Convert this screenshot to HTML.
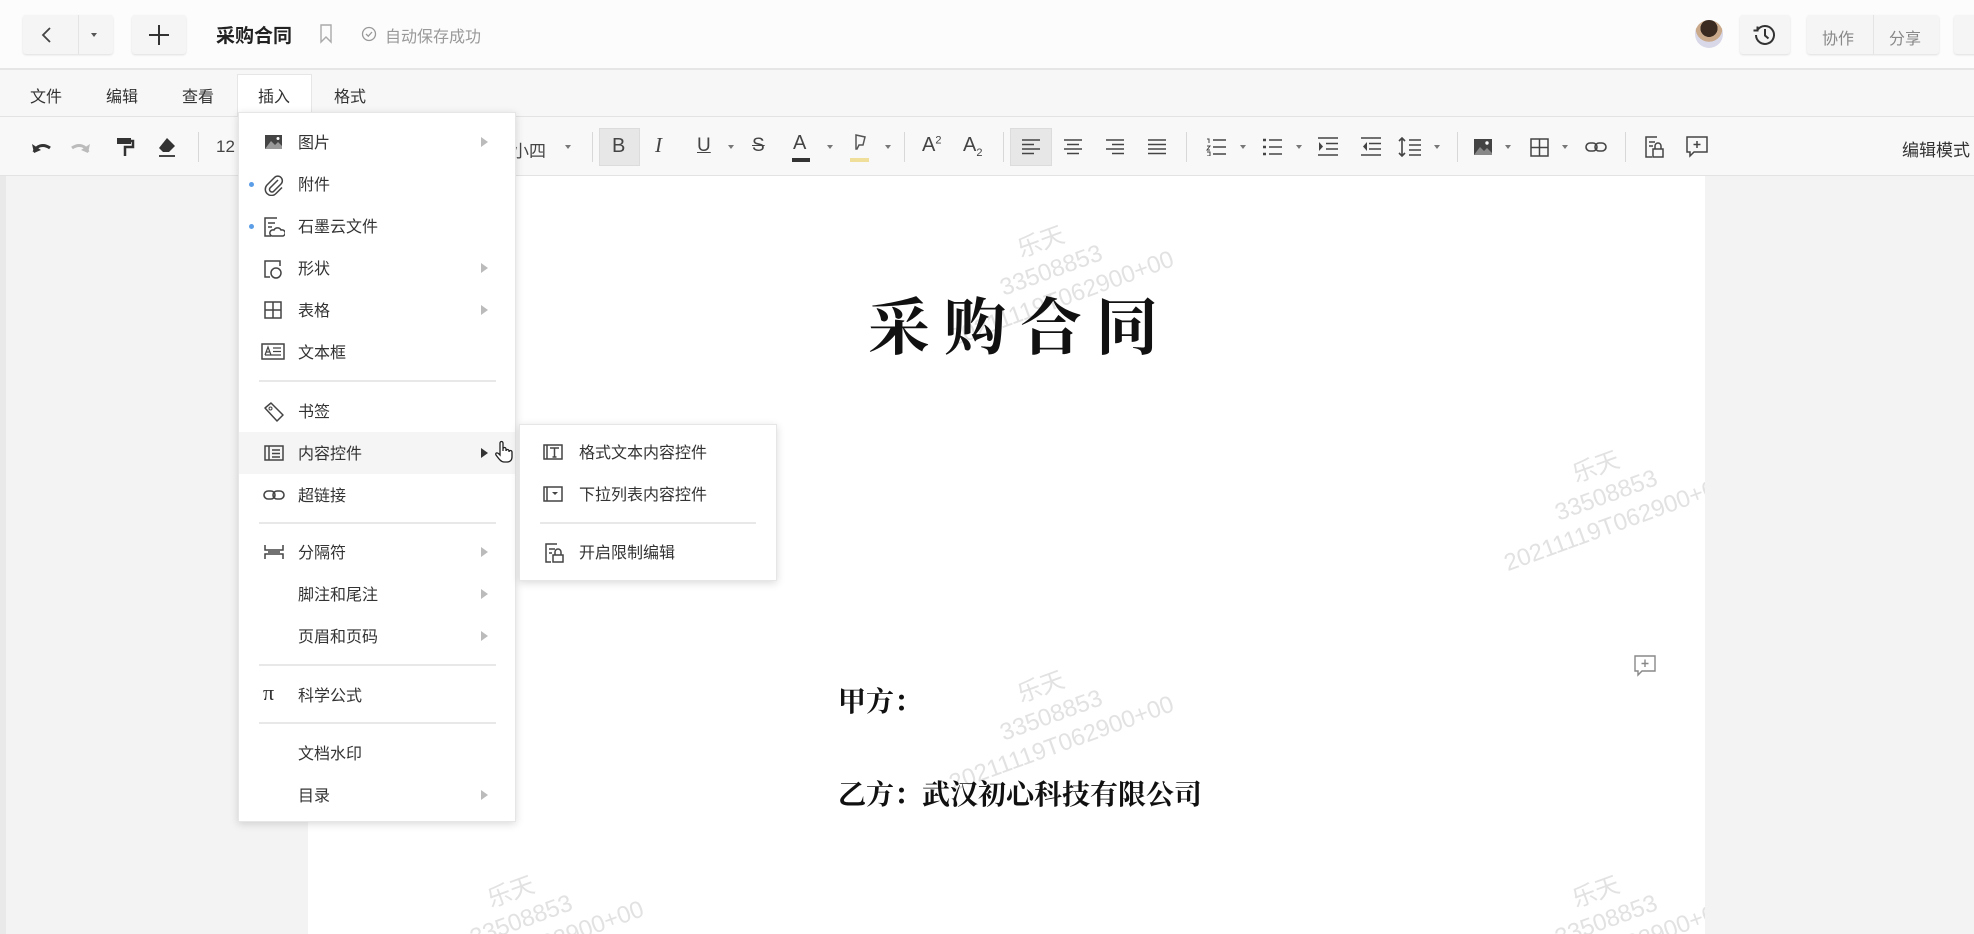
<!DOCTYPE html>
<html style="width:1974px;height:934px;overflow:hidden"><head><meta charset="utf-8">
<style>
*{margin:0;padding:0;box-sizing:border-box}
body{width:1974px;height:934px;overflow:hidden;background:#f3f3f3;font-family:"Liberation Sans","Noto Sans CJK SC",sans-serif;color:#333}
#w{position:relative;width:1974px;height:934px;overflow:hidden}
.a{position:absolute}
.top{left:0;top:0;width:1974px;height:70px;background:#fcfcfc;border-bottom:2px solid #e6e6e6}
.menubar{left:0;top:70px;width:1974px;height:47px;background:#f7f7f7;border-bottom:1px solid #e3e3e3}
.toolbar{left:0;top:117px;width:1974px;height:59px;background:#f8f8f8;border-bottom:1px solid #e3e3e3}
.btn{background:#f5f5f5;border-radius:3px;box-shadow:0 1px 2px rgba(0,0,0,.12)}
.mi{font-size:16px;color:#333;top:83px}
.tb{font-size:17px;color:#444}
.sep{width:1px;height:30px;background:#d8d8d8;top:132px}
.dd{width:0;height:0;border-left:3.5px solid transparent;border-right:3.5px solid transparent;border-top:4px solid #777}
.page{left:308px;top:176px;width:1397px;height:758px;background:#fff;overflow:hidden}
.wm{position:absolute;color:#e2e2e2;font-size:24px;line-height:30px;text-align:center;transform:rotate(-20deg);white-space:nowrap}
.menu{left:238px;top:112px;width:278px;height:710px;background:#fff;box-shadow:0 2px 8px rgba(0,0,0,.15);border:1px solid #e6e6e6}
.it{left:0;width:276px;height:42px;font-size:16px;color:#333}
.it span.t{position:absolute;left:59px;top:8px}
.it svg{position:absolute;left:24px;top:11px}
.arr{position:absolute;left:242px;top:16px;width:0;height:0;border-top:5px solid transparent;border-bottom:5px solid transparent;border-left:7px solid #bbb}
.hr{left:20px;width:237px;height:2px;background:#e8e8e8}
.dot{position:absolute;left:10px;top:19px;width:5px;height:5px;border-radius:50%;background:#5b9de6}
.sub{left:519px;top:424px;width:258px;height:157px;background:#fff;box-shadow:0 2px 8px rgba(0,0,0,.15);border:1px solid #e6e6e6}
.serif{font-family:"Liberation Serif","Noto Serif CJK SC",serif;font-weight:bold;color:#111}
</style></head><body><div id="w">

<div class="a top"></div>
<div class="a btn" style="left:23px;top:15px;width:90px;height:39px"></div>
<div class="a" style="left:78px;top:15px;width:1px;height:39px;background:#e4e4e4"></div>
<svg class="a" style="left:40px;top:26px" width="14" height="18"><path d="M10 2 L3 9 L10 16" fill="none" stroke="#444" stroke-width="1.8"/></svg>
<div class="a dd" style="left:91px;top:33px;border-top-color:#555"></div>
<div class="a btn" style="left:132px;top:15px;width:54px;height:39px"></div>
<svg class="a" style="left:148px;top:24px" width="22" height="22"><path d="M11 1V21M1 11H21" stroke="#333" stroke-width="2"/></svg>
<div class="a" style="left:216px;top:21px;font-size:19px;font-weight:bold;color:#222">采购合同</div>
<svg class="a" style="left:319px;top:24px" width="14" height="20"><path d="M2 1H12V18L7 13L2 18Z" fill="none" stroke="#aaa" stroke-width="1.4"/></svg>
<svg class="a" style="left:361px;top:26px" width="16" height="16"><circle cx="8" cy="8" r="6.5" fill="none" stroke="#999" stroke-width="1.3"/><path d="M5 8L7.3 10.2L11 6" fill="none" stroke="#999" stroke-width="1.3"/></svg>
<div class="a" style="left:385px;top:23px;font-size:16px;color:#999">自动保存成功</div>

<div class="a" style="left:1695px;top:20px;width:28px;height:28px;border-radius:50%;background:radial-gradient(circle at 50% 30%,#3a2a20 0 35%,#c9a98a 36% 55%,#d8d8e8 56%)"></div>
<div class="a btn" style="left:1740px;top:15px;width:50px;height:39px"></div>
<svg class="a" style="left:1752px;top:22px" width="26" height="26"><path d="M5.5 8A9 9 0 1 1 4 13" fill="none" stroke="#333" stroke-width="2"/><path d="M1.5 8.5L5.5 8.5L5.5 4.5" fill="none" stroke="#333" stroke-width="2"/><path d="M13 7V13.5L16.5 16.5" fill="none" stroke="#333" stroke-width="2"/></svg>
<div class="a btn" style="left:1807px;top:15px;width:132px;height:39px"></div>
<div class="a" style="left:1873px;top:15px;width:1px;height:39px;background:#e4e4e4"></div>
<div class="a" style="left:1822px;top:25px;font-size:16px;color:#888">协作</div>
<div class="a" style="left:1889px;top:25px;font-size:16px;color:#888">分享</div>
<div class="a btn" style="left:1954px;top:15px;width:30px;height:39px"></div>

<div class="a menubar"></div>
<div class="a mi" style="left:30px">文件</div>
<div class="a mi" style="left:106px">编辑</div>
<div class="a mi" style="left:182px">查看</div>
<div class="a" style="left:237px;top:74px;width:75px;height:44px;background:#fff;border:1px solid #e6e6e6;border-bottom:none"></div>
<div class="a mi" style="left:258px">插入</div>
<div class="a mi" style="left:334px">格式</div>

<div class="a toolbar"></div>
<svg class="a" style="left:30px;top:138px" width="24" height="18"><path d="M4 14C6 8 13 5 20 10" fill="none" stroke="#333" stroke-width="3"/><path d="M2 6L4 15L11 12Z" fill="#333"/></svg>
<svg class="a" style="left:68px;top:138px" width="24" height="18"><path d="M20 14C18 8 11 5 4 10" fill="none" stroke="#bbb" stroke-width="3"/><path d="M22 6L20 15L13 12Z" fill="#bbb"/></svg>
<svg class="a" style="left:115px;top:136px" width="20" height="22"><rect x="2" y="2" width="14" height="6" fill="#333"/><path d="M16 5H18V11H10V20" fill="none" stroke="#333" stroke-width="2.5"/></svg>
<svg class="a" style="left:156px;top:136px" width="22" height="22"><path d="M11 2L19 10L13 16H7L3 12Z" fill="#333"/><path d="M3 20H19" stroke="#333" stroke-width="1.8"/></svg>
<div class="a sep" style="left:198px"></div>
<div class="a tb" style="left:216px;top:137px">12</div>
<div class="a tb" style="left:512px;top:137px">小四</div>
<div class="a dd" style="left:565px;top:145px"></div>
<div class="a sep" style="left:592px"></div>
<div class="a" style="left:599px;top:128px;width:41px;height:38px;background:#e7e7e7;border:1px solid #dcdcdc"></div>
<div class="a tb" style="left:612px;top:135px;font-size:20px">B</div>
<div class="a" style="left:655px;top:133px;font-size:21px;font-style:italic;font-family:'Liberation Serif',serif;color:#444">I</div>
<div class="a tb" style="left:697px;top:135px;font-size:19px;text-decoration:underline">U</div>
<div class="a dd" style="left:728px;top:145px"></div>
<div class="a tb" style="left:752px;top:135px;font-size:19px;text-decoration:line-through">S</div>
<div class="a tb" style="left:793px;top:132px;font-size:20px">A</div>
<div class="a" style="left:792px;top:158px;width:18px;height:4px;background:#333"></div>
<div class="a dd" style="left:827px;top:145px"></div>
<svg class="a" style="left:851px;top:133px" width="20" height="22"><path d="M5 2L14 4L12 12H8L6 16H5Z" fill="none" stroke="#555" stroke-width="1.5"/></svg>
<div class="a" style="left:850px;top:158px;width:19px;height:4px;background:#f0df9a"></div>
<div class="a dd" style="left:885px;top:145px"></div>
<div class="a sep" style="left:904px"></div>
<div class="a tb" style="left:922px;top:134px;font-size:20px">A<sup style="font-size:11px">2</sup></div>
<div class="a tb" style="left:963px;top:134px;font-size:20px">A<sub style="font-size:11px">2</sub></div>
<div class="a sep" style="left:1003px"></div>
<div class="a" style="left:1010px;top:128px;width:42px;height:38px;background:#e7e7e7;border:1px solid #dcdcdc"></div>
<svg class="a" style="left:1022px;top:139px" width="18" height="16"><path d="M0 1H18M0 5.5H12M0 10H18M0 14.5H12" stroke="#444" stroke-width="1.6"/></svg>
<svg class="a" style="left:1064px;top:139px" width="18" height="16"><path d="M0 1H18M3 5.5H15M0 10H18M3 14.5H15" stroke="#444" stroke-width="1.6"/></svg>
<svg class="a" style="left:1106px;top:139px" width="18" height="16"><path d="M0 1H18M6 5.5H18M0 10H18M6 14.5H18" stroke="#444" stroke-width="1.6"/></svg>
<svg class="a" style="left:1148px;top:139px" width="18" height="16"><path d="M0 1H18M0 5.5H18M0 10H18M0 14.5H18" stroke="#444" stroke-width="1.6"/></svg>
<div class="a sep" style="left:1186px"></div>
<svg class="a" style="left:1206px;top:138px" width="20" height="18"><path d="M7 2H20M7 9H20M7 16H20" stroke="#444" stroke-width="1.6"/><path d="M1 1H3V5M1 8H4L1 12H4M1 14H4V18H1" fill="none" stroke="#444" stroke-width="1"/></svg>
<div class="a dd" style="left:1240px;top:145px"></div>
<svg class="a" style="left:1262px;top:138px" width="20" height="18"><path d="M7 2H20M7 9H20M7 16H20" stroke="#444" stroke-width="1.6"/><path d="M1 2H4M1 9H4M1 16H4" stroke="#444" stroke-width="2.5"/></svg>
<div class="a dd" style="left:1296px;top:145px"></div>
<svg class="a" style="left:1318px;top:137px" width="20" height="20"><path d="M0 1H20M8 6.5H20M8 12H20M0 18H20" stroke="#444" stroke-width="1.6"/><path d="M1 5L5 9.5L1 14Z" fill="#444"/></svg>
<svg class="a" style="left:1361px;top:137px" width="20" height="20"><path d="M0 1H20M8 6.5H20M8 12H20M0 18H20" stroke="#444" stroke-width="1.6"/><path d="M6 5L2 9.5L6 14Z" fill="#444"/></svg>
<svg class="a" style="left:1398px;top:137px" width="24" height="20"><path d="M4 1V19M1 4L4 1L7 4M1 16L4 19L7 16" fill="none" stroke="#444" stroke-width="1.6"/><path d="M11 3H23M11 8H23M11 13H23M11 18H23" stroke="#444" stroke-width="1.4"/></svg>
<div class="a dd" style="left:1434px;top:145px"></div>
<div class="a sep" style="left:1457px"></div>
<svg class="a" style="left:1473px;top:138px" width="20" height="18"><rect x="1" y="1" width="18" height="16" fill="#444"/><path d="M1 17L7 9L11 13L14 10L19 15V17Z" fill="#888"/><circle cx="14" cy="5" r="1.7" fill="#fff"/></svg>
<div class="a dd" style="left:1505px;top:145px"></div>
<svg class="a" style="left:1530px;top:138px" width="19" height="19"><rect x="1" y="1" width="17" height="17" fill="none" stroke="#444" stroke-width="1.5"/><path d="M9.5 1V18M1 9.5H18" stroke="#444" stroke-width="1.5"/></svg>
<div class="a dd" style="left:1562px;top:145px"></div>
<svg class="a" style="left:1585px;top:140px" width="22" height="14"><rect x="1" y="3" width="11" height="8" rx="4" fill="none" stroke="#444" stroke-width="1.6"/><rect x="10" y="3" width="11" height="8" rx="4" fill="none" stroke="#444" stroke-width="1.6"/></svg>
<div class="a sep" style="left:1625px"></div>
<svg class="a" style="left:1644px;top:135px" width="20" height="24"><path d="M13 2H2V22H8" fill="none" stroke="#444" stroke-width="1.5"/><path d="M5 7H11M5 11H9" stroke="#444" stroke-width="1.5"/><rect x="9" y="14" width="10" height="8" fill="none" stroke="#444" stroke-width="1.5"/><path d="M11 14V11A3 3 0 0 1 17 11V14" fill="none" stroke="#444" stroke-width="1.5"/></svg>
<svg class="a" style="left:1686px;top:136px" width="22" height="22"><path d="M1 1H21V16H8L4 20V16H1Z" fill="none" stroke="#444" stroke-width="1.5"/><path d="M11 5V12M7.5 8.5H14.5" stroke="#444" stroke-width="1.5"/></svg>
<div class="a" style="left:1902px;top:136px;font-size:17px;color:#333">编辑模式</div>

<div class="a" style="left:0;top:176px;width:6px;height:758px;background:#e9e9e9"></div>
<div class="a page">
 <div class="wm" style="left:625px;top:50px">乐天<br>33508853<br>20211119T062900+00</div>
 <div class="wm" style="left:1180px;top:275px">乐天<br>33508853<br>20211119T062900+00</div>
 <div class="wm" style="left:625px;top:495px">乐天<br>33508853<br>20211119T062900+00</div>
 <div class="wm" style="left:95px;top:700px">乐天<br>33508853<br>20211119T062900+00</div>
 <div class="wm" style="left:1180px;top:700px">乐天<br>33508853<br>20211119T062900+00</div>
</div>
<div class="a serif" style="left:868px;top:278px;font-size:62px;letter-spacing:14px">采购合同</div>
<div class="a serif" style="left:838px;top:680px;font-size:28px">甲方：</div>
<div class="a serif" style="left:838px;top:773px;font-size:28px">乙方：武汉初心科技有限公司</div>
<svg class="a" style="left:1634px;top:655px" width="22" height="22"><path d="M1 1H21V16H8L4 20V16H1Z" fill="none" stroke="#888" stroke-width="1.4"/><path d="M11 4.5V12M7.5 8.5H14.5" stroke="#888" stroke-width="1.4"/></svg>

<div class="a menu">
 <div class="a it" style="top:8px"><svg width="20" height="20"><rect x="2" y="3" width="17" height="14" fill="#444"/><path d="M2 17L8 9L12 13L15 10L19 14V17Z" fill="#999"/><circle cx="15" cy="6.5" r="1.5" fill="#fff"/></svg><span class="t">图片</span><i class="arr"></i></div>
 <div class="a it" style="top:50px"><i class="dot"></i><svg width="22" height="22"><path d="M15 6L7 14A2.5 2.5 0 0 0 11 17L18 10A4.5 4.5 0 0 0 11.5 3.5L4 11A6 6 0 0 0 13 19.5L19 13.5" fill="none" stroke="#444" stroke-width="1.5"/></svg><span class="t">附件</span></div>
 <div class="a it" style="top:92px"><i class="dot"></i><svg width="22" height="22"><path d="M14 2H2V20H8" fill="none" stroke="#444" stroke-width="1.5"/><path d="M5 7H12M5 11H9" stroke="#444" stroke-width="1.5"/><path d="M9 20H20A3 3 0 0 0 18 14A4 4 0 0 0 11 14A3 3 0 0 0 9 20Z" fill="none" stroke="#444" stroke-width="1.5"/></svg><span class="t">石墨云文件</span></div>
 <div class="a it" style="top:134px"><svg width="22" height="22"><path d="M9 3H2V19H7" fill="none" stroke="#444" stroke-width="1.5"/><path d="M9 3H17V8" fill="none" stroke="#444" stroke-width="1.5"/><circle cx="13" cy="15" r="5" fill="none" stroke="#444" stroke-width="1.5"/></svg><span class="t">形状</span><i class="arr"></i></div>
 <div class="a it" style="top:176px"><svg width="20" height="20"><rect x="2" y="2" width="16" height="16" fill="none" stroke="#444" stroke-width="1.5"/><path d="M10 2V18M2 10H18" stroke="#444" stroke-width="1.5"/></svg><span class="t">表格</span><i class="arr"></i></div>
 <div class="a it" style="top:218px"><svg width="24" height="20" style="left:22px"><rect x="1" y="2" width="22" height="15" fill="none" stroke="#444" stroke-width="1.5"/><path d="M4 13L7 5L10 13M5 10H9M12 6H20M12 9.5H20M4 13H20" fill="none" stroke="#444" stroke-width="1.2"/></svg><span class="t">文本框</span></div>
 <div class="a hr" style="top:267px"></div>
 <div class="a it" style="top:277px"><svg width="22" height="22"><path d="M2 7L8 2L20 14L14 20Z" fill="none" stroke="#444" stroke-width="1.5" stroke-linejoin="round"/><circle cx="7.5" cy="7.5" r="1.5" fill="none" stroke="#444"/></svg><span class="t">书签</span></div>
 <div class="a" style="left:0;top:319px;width:276px;height:42px;background:#f5f5f5"></div>
 <div class="a it" style="top:319px"><svg width="22" height="20"><path d="M2 3H20V17H2Z M6 3V17" fill="none" stroke="#444" stroke-width="1.5"/><path d="M9 7H17M9 10.5H17M9 14H17" stroke="#444" stroke-width="1.4"/></svg><span class="t">内容控件</span><i class="arr" style="border-left-color:#333"></i></div>
 <div class="a it" style="top:361px"><svg width="22" height="20"><rect x="1" y="6" width="11" height="8" rx="4" fill="none" stroke="#444" stroke-width="1.6"/><rect x="10" y="6" width="11" height="8" rx="4" fill="none" stroke="#444" stroke-width="1.6"/></svg><span class="t">超链接</span></div>
 <div class="a hr" style="top:409px"></div>
 <div class="a it" style="top:418px"><svg width="22" height="20"><path d="M2 3V8H20V3M2 17V12H20V17M5 10H17" fill="none" stroke="#444" stroke-width="1.5"/></svg><span class="t">分隔符</span><i class="arr"></i></div>
 <div class="a it" style="top:460px"><span class="t">脚注和尾注</span><i class="arr"></i></div>
 <div class="a it" style="top:502px"><span class="t">页眉和页码</span><i class="arr"></i></div>
 <div class="a hr" style="top:551px"></div>
 <div class="a it" style="top:561px"><span class="t" style="left:24px;top:6px;font-family:'Liberation Serif',serif;font-size:22px">π</span><span class="t">科学公式</span></div>
 <div class="a hr" style="top:609px"></div>
 <div class="a it" style="top:619px"><span class="t">文档水印</span></div>
 <div class="a it" style="top:661px"><span class="t">目录</span><i class="arr"></i></div>
</div>
<svg class="a" style="left:494px;top:440px" width="20" height="24"><path d="M6 13V3A1.5 1.5 0 0 1 9 3V11V9A1.5 1.5 0 0 1 12 9V11A1.5 1.5 0 0 1 15 11V12A1.5 1.5 0 0 1 18 12V17C18 20 16 22 13 22H10C7 22 5 19 2 15C1 13 3 12 5 14L6 15Z" fill="#fff" stroke="#222" stroke-width="1.3"/></svg>

<div class="a sub">
 <div class="a it" style="top:6px;width:256px"><svg width="22" height="20" style="left:22px"><path d="M2 3H20V17H2Z M5 3V17" fill="none" stroke="#444" stroke-width="1.5"/><path d="M8 6H17M12.5 6V15M10.5 15H14.5" stroke="#444" stroke-width="1.5"/></svg><span class="t">格式文本内容控件</span></div>
 <div class="a it" style="top:48px;width:256px"><svg width="22" height="20" style="left:22px"><path d="M2 3H20V17H2Z M5 3V17" fill="none" stroke="#444" stroke-width="1.5"/><path d="M10 8H16L13 11Z" fill="#444"/></svg><span class="t">下拉列表内容控件</span></div>
 <div class="a hr" style="top:97px;left:20px;width:216px"></div>
 <div class="a it" style="top:106px;width:256px"><svg width="22" height="22" style="left:24px"><path d="M13 2H2V20H7" fill="none" stroke="#444" stroke-width="1.5"/><path d="M5 7H11M5 11H8" stroke="#444" stroke-width="1.5"/><rect x="9" y="13" width="10" height="7" fill="none" stroke="#444" stroke-width="1.5"/><path d="M11 13V10A3 3 0 0 1 17 10V13" fill="none" stroke="#444" stroke-width="1.5"/></svg><span class="t">开启限制编辑</span></div>
</div>
</div></body></html>
